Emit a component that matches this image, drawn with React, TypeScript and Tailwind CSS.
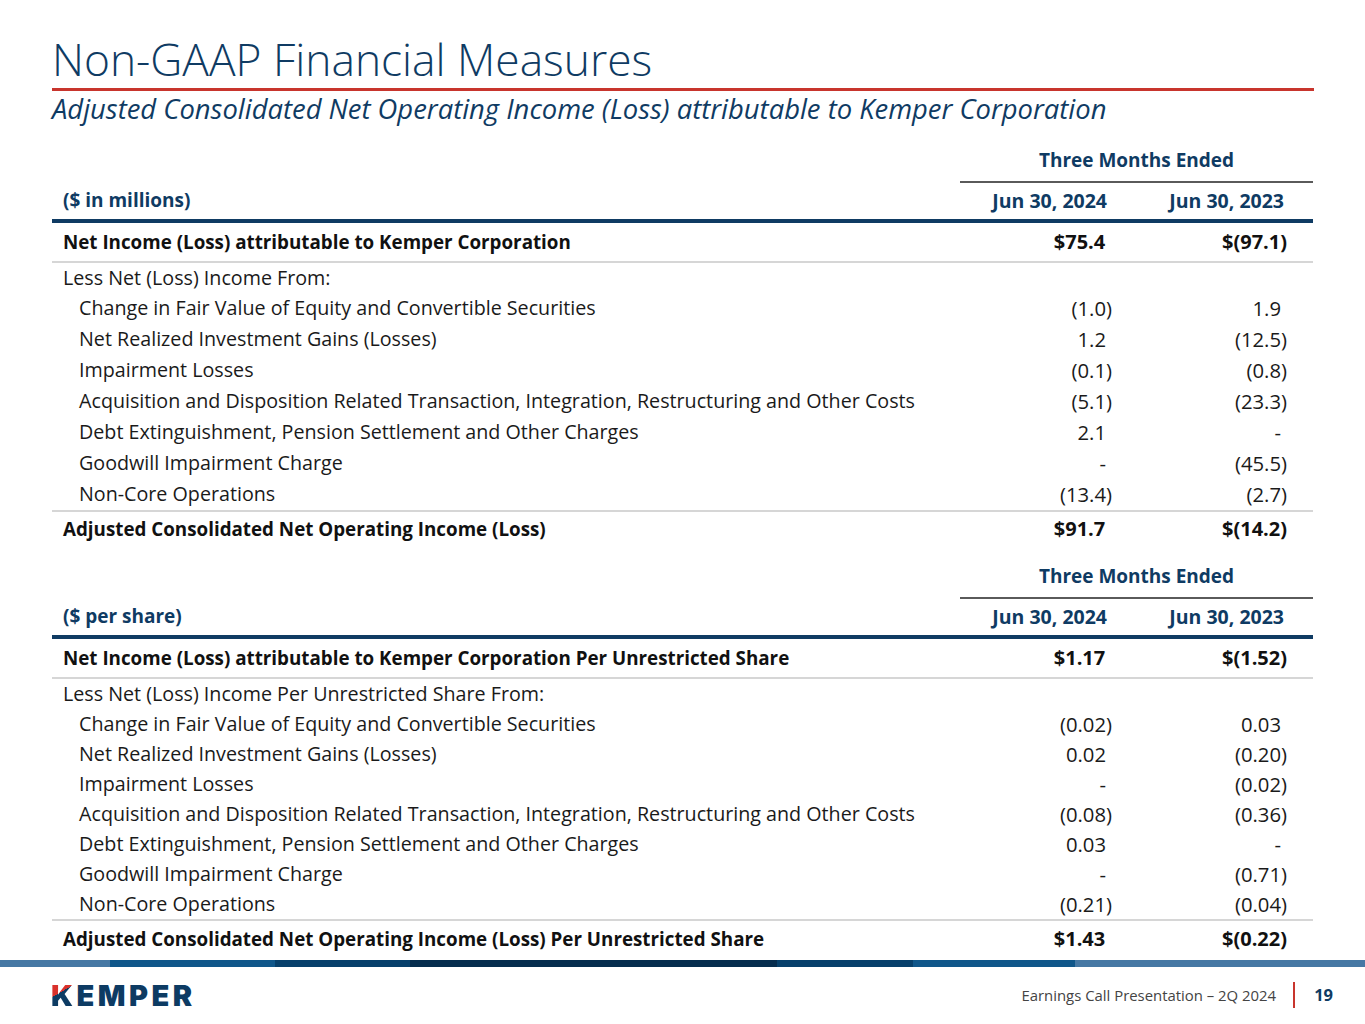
import React from "react";

type Row = [string, string, string];

const millions: Row[] = [
  ["Change in Fair Value of Equity and Convertible Securities", "(1.0)", "1.9"],
  ["Net Realized Investment Gains (Losses)", "1.2", "(12.5)"],
  ["Impairment Losses", "(0.1)", "(0.8)"],
  ["Acquisition and Disposition Related Transaction, Integration, Restructuring and Other Costs", "(5.1)", "(23.3)"],
  ["Debt Extinguishment, Pension Settlement and Other Charges", "2.1", "-"],
  ["Goodwill Impairment Charge", "-", "(45.5)"],
  ["Non-Core Operations", "(13.4)", "(2.7)"],
];

const perShare: Row[] = [
  ["Change in Fair Value of Equity and Convertible Securities", "(0.02)", "0.03"],
  ["Net Realized Investment Gains (Losses)", "0.02", "(0.20)"],
  ["Impairment Losses", "-", "(0.02)"],
  ["Acquisition and Disposition Related Transaction, Integration, Restructuring and Other Costs", "(0.08)", "(0.36)"],
  ["Debt Extinguishment, Pension Settlement and Other Charges", "0.03", "-"],
  ["Goodwill Impairment Charge", "-", "(0.71)"],
  ["Non-Core Operations", "(0.21)", "(0.04)"],
];

// keeps numbers aligned with the ones that end in a closing paren
function Val({ v }: { v: string }) {
  const paren = v.endsWith(")");
  return (
    <span>
      {v}
      {!paren && <span className="invisible">)</span>}
    </span>
  );
}

function Section({
  unit,
  top,
  less,
  rows,
  bottom,
  rowH,
  lastH,
}: {
  unit: string;
  top: Row;
  less: string;
  rows: Row[];
  bottom: Row;
  rowH: string;
  lastH: string;
}) {
  return (
    <div className="flex flex-col">
      <div className="grid h-[40px] grid-cols-[908px_353px]">
        <div />
        <div className="flex items-center justify-center text-[19px] font-bold text-[#0f3b63]">Three Months Ended</div>
      </div>
      <div className="grid grid-cols-[908px_353px]">
        <div />
        <div className="h-[2px] bg-[#5a5a5a]" />
      </div>
      <div className="grid h-[36px] grid-cols-[908px_177px_176px] items-center text-[19px] font-bold text-[#0f3b63]">
        <div className="pl-[11px]">{unit}</div>
        <div className="pr-[30px] text-right text-[19.5px]">Jun 30, 2024</div>
        <div className="pr-[29px] text-right text-[19.5px]">Jun 30, 2023</div>
      </div>
      <div className="h-[4px] bg-[#0f3b63]" />
      <div className="grid h-[38px] grid-cols-[908px_177px_176px] items-center font-bold text-[#111]">
        <div className="pl-[11px] text-[18.8px]">{top[0]}</div>
        <div className="pr-[25px] text-right text-[20px]">
          <Val v={top[1]} />
        </div>
        <div className="pr-[26px] text-right text-[20px]">
          <Val v={top[2]} />
        </div>
      </div>
      <div className="h-[2px] bg-[#d6d6d6]" />
      <div className="flex h-[30px] items-center pl-[11px] text-[19.7px] text-[#1a1a1a]">{less}</div>
      {rows.map((r) => (
        <div key={r[0]} className={`grid ${rowH} grid-cols-[908px_177px_176px] items-center text-[#1a1a1a]`}>
          <div className="pl-[27px] text-[19.7px]">{r[0]}</div>
          <div className="pr-[25px] text-right text-[20.3px]">
            <Val v={r[1]} />
          </div>
          <div className="pr-[26px] text-right text-[20.3px]">
            <Val v={r[2]} />
          </div>
        </div>
      ))}
      <div className="h-[2px] bg-[#d6d6d6]" />
      <div className={`grid ${lastH} grid-cols-[908px_177px_176px] items-center font-bold text-[#111]`}>
        <div className="pl-[11px] text-[18.8px]">{bottom[0]}</div>
        <div className="pr-[25px] text-right text-[20px]">
          <Val v={bottom[1]} />
        </div>
        <div className="pr-[26px] text-right text-[20px]">
          <Val v={bottom[2]} />
        </div>
      </div>
    </div>
  );
}

export default function App() {
  return (
    <div className="flex h-[1024px] w-[1365px] flex-col overflow-hidden bg-white font-['Open_Sans',sans-serif]">
      <div className="px-[52px]">
        <h1 className="mt-[37px] text-[44.3px] font-light leading-none text-[#0f3b63]">Non-GAAP Financial Measures</h1>
        <div className="mt-[7px] h-[3px] w-[1262px] bg-[#c8352d]" />
        <h2 className="mt-[4px] text-[27.4px] italic leading-none text-[#0f3b63]">
          Adjusted Consolidated Net Operating Income (Loss) attributable to Kemper Corporation
        </h2>
        <div className="mt-[18px] w-[1261px]">
          <Section
            unit="($ in millions)"
            top={["Net Income (Loss) attributable to Kemper Corporation", "$75.4", "$(97.1)"]}
            less="Less Net (Loss) Income From:"
            rows={millions}
            bottom={["Adjusted Consolidated Net Operating Income (Loss)", "$91.7", "$(14.2)"]}
            rowH="h-[31px]"
            lastH="h-[34px]"
          />
          <div className="h-[11px]" />
          <Section
            unit="($ per share)"
            top={["Net Income (Loss) attributable to Kemper Corporation Per Unrestricted Share", "$1.17", "$(1.52)"]}
            less="Less Net (Loss) Income Per Unrestricted Share From:"
            rows={perShare}
            bottom={["Adjusted Consolidated Net Operating Income (Loss) Per Unrestricted Share", "$1.43", "$(0.22)"]}
            rowH="h-[30px]"
            lastH="h-[36px]"
          />
        </div>
      </div>
      <div className="mt-[3px] h-[7px] w-full bg-[linear-gradient(90deg,#4678a4_0,#4678a4_110px,#10578a_110px,#10578a_275px,#07406b_275px,#07406b_410px,#062d4e_410px,#062d4e_777px,#07406b_777px,#07406b_913px,#10578a_913px,#10578a_1075px,#4678a4_1075px)]" />
      <div className="flex flex-1 items-center justify-between pl-[51px] pr-[32px]">
        <div className="flex font-['Inter',sans-serif] text-[29px] font-black leading-none tracking-[3.5px] text-[#0d3b63]">
          <span className="bg-[linear-gradient(150deg,#d9312b_0,#d9312b_38%,#0d3b63_38%)] bg-clip-text text-transparent">K</span>
          <span>EMPER</span>
        </div>
        <div className="flex items-center">
          <span className="text-[14.9px] text-[#444]">Earnings Call Presentation – 2Q 2024</span>
          <div className="ml-[17px] mr-[19px] h-[26px] w-[2px] bg-[#c8352d]" />
          <span className="text-[16.5px] font-bold text-[#0f3b63]">19</span>
        </div>
      </div>
    </div>
  );
}
